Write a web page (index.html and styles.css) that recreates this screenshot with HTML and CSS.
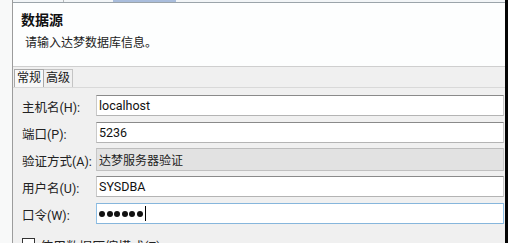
FILE: index.html
```html
<!DOCTYPE html>
<html lang="zh">
<head>
<meta charset="utf-8">
<link rel="stylesheet" href="styles.css">
</head>
<body>
<div class="screen">
  <div class="left-strip"></div>
  <div class="dialog">
    <div class="topbar">
      <div class="seg seg-a"></div>
      <div class="seg seg-b"></div>
      <div class="seg seg-blue"></div>
      <div class="seg seg-rest"></div>
    </div>
    <div class="header">
      <div class="title">数据源</div>
      <div class="subtitle">请输入达梦数据库信息。</div>
    </div>
    <div class="body">
      <div class="tabs">
        <div class="tab active">常规</div>
        <div class="tab">高级</div>
      </div>
      <div class="panel">
        <div class="form">
          <div class="label">主机名(H):</div>
          <div class="field"><div class="input">localhost</div></div>
          <div class="label">端口(P):</div>
          <div class="field"><div class="input">5236</div></div>
          <div class="label">验证方式(A):</div>
          <div class="field"><div class="combo">达梦服务器验证</div></div>
          <div class="label">用户名(U):</div>
          <div class="field"><div class="input">SYSDBA</div></div>
          <div class="label">口令(W):</div>
          <div class="field"><div class="input focused"><span class="dot"></span><span class="dot"></span><span class="dot"></span><span class="dot"></span><span class="dot"></span><span class="dot"></span><span class="caret"></span></div></div>
        </div>
        <div class="check-row">
          <span class="checkbox"></span>
          <span class="check-label">使用数据压缩模式(Z)</span>
        </div>
      </div>
    </div>
  </div>
  <div class="black-strip"></div>
</div>
</body>
</html>
```

FILE: styles.css
```css
html, body {
  margin: 0;
  padding: 0;
}
body {
  width: 508px;
  height: 243px;
  overflow: hidden;
  background: #f7f7f7;
  font-family: Roboto, "Noto Sans CJK SC", "Noto Sans", sans-serif;
  color: #1a1a1a;
}
.screen {
  display: flex;
  width: 508px;
  height: 243px;
}
.left-strip {
  width: 12px;
  background: #f8f9f9;
  border-right: 1px solid #9c9c9c;
  flex: none;
}
.dialog {
  flex: 1;
  display: flex;
  flex-direction: column;
  background: #f0f0f0;
  min-width: 0;
}
.black-strip {
  width: 3px;
  background: #050505;
  flex: none;
}
.topbar {
  display: flex;
  height: 2px;
  border-bottom: 1px solid #9ba4aa;
  background: #f2f5f7;
  flex: none;
}
.seg-a {
  width: 50px;
  border-right: 1px solid #b5b9bc;
}
.seg-b {
  width: 49px;
}
.seg-blue {
  width: 63px;
  background: #a9bddc;
}
.seg-rest {
  flex: 1;
}
.header {
  height: 64px;
  background: #fdfefe;
  border-bottom: 1px solid #cfcfcf;
  box-sizing: border-box;
  padding: 7px 0 0 8px;
  flex: none;
}
.title {
  font-size: 14px;
  font-weight: bold;
  line-height: 20px;
  color: #111;
}
.subtitle {
  font-size: 12px;
  line-height: 18px;
  margin-top: 4px;
  padding-left: 4px;
  color: #222;
}
.body {
  flex: 1;
  display: flex;
  flex-direction: column;
  padding-top: 2px;
}
.tabs {
  display: flex;
  height: 18px;
  padding-left: 1px;
}
.tab {
  font-size: 12px;
  line-height: 17px;
  padding: 0 2px;
  border: 1px solid #c4c4c4;
  border-bottom: none;
  margin-right: -1px;
  background: #f0f0f0;
  color: #1a1a1a;
}
.tab.active {
  background: #f8f8f8;
  border-color: #a9a9a9;
  position: relative;
  z-index: 1;
}
.panel {
  flex: 1;
  border-top: 1px solid #d9d9d9;
  padding: 4px 1px 0 9px;
}
.form {
  display: grid;
  grid-template-columns: 74px 1fr;
  grid-auto-rows: 27px;
}
.label {
  font-size: 12.5px;
  display: flex;
  align-items: center;
  color: #222;
  padding-top: 1px;
  white-space: nowrap;
}
.field {
  display: flex;
  align-items: center;
}
.input {
  flex: 1;
  height: 21px;
  box-sizing: border-box;
  background: #fff;
  border: 1px solid #c9c9c9;
  border-top-color: #8a8a8a;
  border-bottom-color: #b4b4b4;
  font-size: 12.5px;
  line-height: 19px;
  padding-left: 2px;
  display: flex;
  align-items: center;
  color: #111;
}
.combo {
  flex: 1;
  height: 23px;
  box-sizing: border-box;
  background: #e2e2e2;
  border: 1px solid #c6c6c6;
  border-top-color: #bdbdbd;
  border-bottom-color: #c0c0c0;
  font-size: 12px;
  padding-left: 2px;
  display: flex;
  align-items: center;
  color: #222;
}
.input.focused {
  border-color: #8fc0e6;
  border-top-color: #86b6dc;
  border-bottom-color: #86b6dc;
  gap: 1.5px;
}
.dot {
  width: 6px;
  height: 6px;
  border-radius: 50%;
  background: #111;
  flex: none;
}
.caret {
  width: 1px;
  height: 15px;
  background: #000;
  margin-left: 1px;
}
.check-row {
  display: flex;
  align-items: flex-start;
  margin-top: 11px;
}
.checkbox {
  width: 11px;
  height: 11px;
  border: 1px solid #333;
  background: #fff;
  flex: none;
}
.check-label {
  font-size: 13px;
  line-height: 16px;
  margin-left: 5px;
  margin-top: 1px;
  color: #222;
}
```
